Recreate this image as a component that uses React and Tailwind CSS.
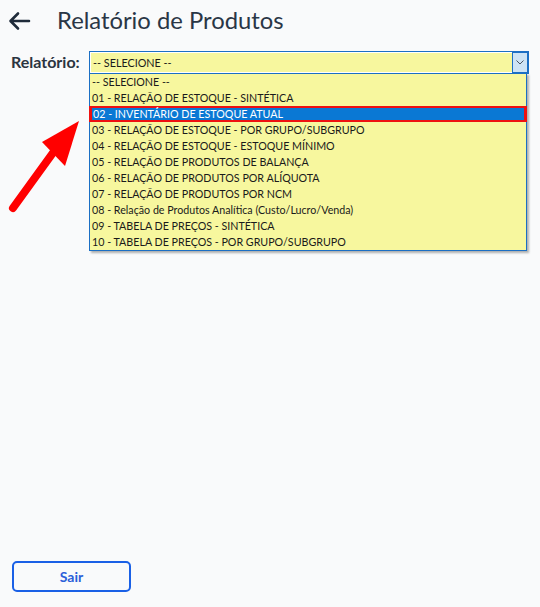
import React from "react";

const items = [
  "-- SELECIONE --",
  "01 - RELAÇÃO DE ESTOQUE - SINTÉTICA",
  "02 - INVENTÁRIO DE ESTOQUE ATUAL",
  "03 - RELAÇÃO DE ESTOQUE - POR GRUPO/SUBGRUPO",
  "04 - RELAÇÃO DE ESTOQUE - ESTOQUE MÍNIMO",
  "05 - RELAÇÃO DE PRODUTOS DE BALANÇA",
  "06 - RELAÇÃO DE PRODUTOS POR ALÍQUOTA",
  "07 - RELAÇÃO DE PRODUTOS POR NCM",
  "08 - Relação de Produtos Analítica (Custo/Lucro/Venda)",
  "09 - TABELA DE PREÇOS - SINTÉTICA",
  "10 - TABELA DE PREÇOS - POR GRUPO/SUBGRUPO",
];

export default function App() {
  return (
    <div
      className="relative min-h-[607px] w-[540px] bg-[#f9fafb] flex flex-col"
      style={{ fontFamily: "Lato, 'Open Sans', sans-serif" }}
    >
      <div className="flex items-center h-[40px] pl-[8px] pt-[1px]">
        <svg width="24" height="20" viewBox="0 0 24 20" fill="none" stroke="#1f2b3a" strokeWidth="2.6" strokeLinecap="round" strokeLinejoin="round">
          <path d="M21 10H3M10 2.5L2.5 10L10 17.5" />
        </svg>
        <h1 className="ml-[25px] text-[23.8px] leading-none text-[#2a3646] font-normal">
          Relatório de Produtos
        </h1>
      </div>

      <div className="flex items-start mt-[11px] pl-[11px]">
        <label className="text-[16px] font-bold text-[#2b3440] leading-[22px] w-[78px]">Relatório:</label>
        <div className="relative">
          <div className="w-[440px] h-[23px] border border-[#1c6fc4] bg-white p-px flex">
            <div className="flex-1 bg-[#f7f79e] text-[10.8px] text-[#1a1a1a] leading-[19px] pl-[2px]">
              -- SELECIONE --
            </div>
            <div className="w-[16px] -my-px -mr-px bg-[#cde3f5] border border-[#1c6fc4] flex items-center justify-center">
              <svg width="8" height="5" viewBox="0 0 8 5" fill="none" stroke="#4a5563" strokeWidth="1">
                <path d="M0.5 0.5L4 4L7.5 0.5" />
              </svg>
            </div>
          </div>
          <div className="absolute left-0 top-[22px] w-[438px] border border-[#1c6fc4] bg-[#f7f79e] shadow-[2px_2px_2px_rgba(0,0,0,0.3)] z-10">
            {items.map((t, i) =>
              i === 2 ? (
                <div
                  key={i}
                  className="h-[16px] bg-[#0a78d4] text-white text-[10.7px] leading-[12px] pl-px border-2 border-x-[3px] border-[#ee1111] -mx-px box-border whitespace-nowrap"
                >
                  {t}
                </div>
              ) : (
                <div key={i} className="h-[16px] text-[10.7px] leading-[16px] text-[#1a1a1a] pl-[2px] whitespace-nowrap">
                  {t}
                </div>
              )
            )}
          </div>
        </div>
      </div>

      <svg className="absolute left-0 top-0 pointer-events-none" width="100" height="230" viewBox="0 0 100 230">
        <line x1="13" y1="208" x2="55" y2="150" stroke="#ff0000" strokeWidth="8" strokeLinecap="round" />
        <polygon points="79,121 42,142 65,166" fill="#ff0000" />
      </svg>

      <div className="mt-auto pl-[12px] pb-[15px]">
        <button className="w-[119px] h-[31px] border-2 border-[#1a60e6] rounded-[5px] text-[#2b5fd9] text-[14px] font-bold bg-[#f9fafb]">
          Sair
        </button>
      </div>
    </div>
  );
}
